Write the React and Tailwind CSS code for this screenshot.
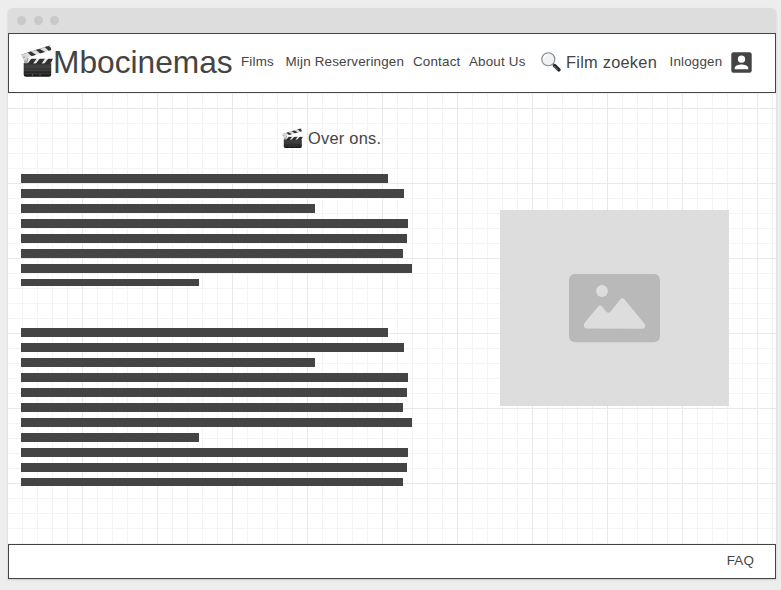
const paragraphs = [
  [
    'h-[9px] w-[367px]', 'h-[9px] w-[383px]', 'h-[9px] w-[294px]', 'h-[9px] w-[387px]',
    'h-[9px] w-[386px]', 'h-[9px] w-[382px]', 'h-[9px] w-[391px]', 'h-[7px] w-[178px]',
  ],
  [
    'h-[9px] w-[367px]', 'h-[9px] w-[383px]', 'h-[9px] w-[294px]', 'h-[9px] w-[387px]',
    'h-[9px] w-[386px]', 'h-[9px] w-[382px]', 'h-[9px] w-[391px]', 'h-[9px] w-[178px]',
    'h-[9px] w-[387px]', 'h-[9px] w-[386px]', 'h-[8px] w-[382px]',
  ],
];

function Clapper({ className }) {
  return (
    <svg viewBox="0 0 32 32" preserveAspectRatio="none" className={className} aria-hidden="true">
      <defs>
        <linearGradient id="slate" x1="0" y1="0" x2="0" y2="1">
          <stop offset="0" stopColor="#444" />
          <stop offset=".55" stopColor="#303030" />
          <stop offset="1" stopColor="#151515" />
        </linearGradient>
        <clipPath id="topStick"><path d="M.2 9.5 29.4.3 30.2 5 1.8 14Z" /></clipPath>
        <clipPath id="lowStick"><path d="M2 13.8H31.8L30.4 19H3Z" /></clipPath>
      </defs>
      <path d="M2.7 18H30.2V29.5Q30.2 31.8 28 31.8H5Q2.7 31.8 2.7 29.5Z" fill="url(#slate)" />
      <path d="M3.5 22.2H29.8M3.5 25.2H29.8M3.5 28.8H29.8" stroke="#5c5c5c" strokeWidth=".5" />
      <path d="M11.5 29V31M19 29V31" stroke="#777" strokeWidth=".6" />
      <g clipPath="url(#topStick)">
        <path d="M0 0H32V16H0Z" fill="#dedede" />
        <path d="M5 6H9L17 11 12 12.4ZM13 3.5H18L26 8 20.5 9.5ZM22 .5H27L35 6.5 29 7Z" fill="#333" />
        <path d="M.2 9.5 29.4.3" stroke="#777" strokeWidth=".7" />
      </g>
      <path d="M.2 9.5 2 14 4 18.5H8L8.8 15 5 10Z" fill="#d5d5d5" />
      <path d="M3 15.5 7.2 14.8 6 18.5H3.5Z" fill="#aaa" />
      <circle cx="3" cy="12" r=".6" fill="#555" />
      <circle cx="6.6" cy="14" r=".6" fill="#555" />
      <g clipPath="url(#lowStick)">
        <path d="M7 13.5H32V19H7Z" fill="#e6e6e6" />
        <path d="M10.8 13H16L11.5 19.5H6ZM19.2 13H24.4L20 19.5H14.2ZM27.8 13H33L28.5 19.5H22.6Z" fill="#303030" />
      </g>
      <path d="M3 18.8H30.3" stroke="#292929" strokeWidth=".8" />
    </svg>
  );
}

function Magnifier() {
  return (
    <svg viewBox="0 0 20 20" className="mt-px h-5 w-5 shrink-0" aria-hidden="true">
      <path d="m11.7 11.8 2.3 2.3" stroke="#8b9299" strokeWidth="2.2" />
      <path d="m13.7 13.8 4.1 4" stroke="#242729" strokeWidth="3.7" strokeLinecap="round" />
      <path d="m12.8 14 3.8 3.9" stroke="#66727a" strokeWidth="1.1" />
      <circle cx="7.3" cy="7.3" r="6.5" fill="#f0f2f3" stroke="#7b858d" strokeWidth="1.1" />
      <path d="M2.6 7.4A4.8 4.8 0 0 1 7.3 2.6" fill="none" stroke="#fff" strokeWidth="1.2" />
    </svg>
  );
}

function Account() {
  return (
    <svg viewBox="0 0 21 21" className="ml-[9px] h-[21px] w-[21px] shrink-0" aria-hidden="true">
      <rect x=".3" y=".3" width="20.4" height="20.4" rx="2.2" fill="#444" />
      <circle cx="10.5" cy="7.2" r="3.6" fill="#fff" />
      <path d="M3.7 17.2V16C3.7 13.6 8 12.5 10.5 12.5S17.3 13.6 17.3 16V17.2Z" fill="#fff" />
    </svg>
  );
}

function Picture() {
  return (
    <svg viewBox="0 0 91 69" className="h-[69px] w-[91px]" aria-hidden="true">
      <rect y="-.1" width="91" height="68.4" rx="6" fill="#b9b9b9" />
      <circle cx="33" cy="17" r="5.9" fill="#ddd" />
      <path d="M15.5 49 28.9 32.8Q31.1 30 33.4 32.8L36.6 37Q39.4 40.3 42 37L51.3 25.5Q53.4 22.8 55.6 25.5L75.1 49.3C77.5 52.3 75.8 54.8 72.8 54.8L18 54.6C15 54.6 14 51.4 15.5 49Z" fill="#ddd" />
    </svg>
  );
}

export default function App() {
  return (
    <div className="h-[590px] w-[781px] overflow-hidden bg-[#ededed] px-2 pt-2 font-['Liberation_Sans',Arial,sans-serif] text-[#444]">
      <div className="flex h-[571px] w-[768px] flex-col rounded-t bg-white shadow-[0_1px_2px_rgba(0,0,0,0.15)]">
        <div className="flex h-[25px] shrink-0 items-center gap-[7.5px] rounded-t bg-[#ddd] pl-[9px]">
          <span className="h-[9px] w-[9px] rounded-full bg-[#c9c9c9]" />
          <span className="h-[9px] w-[9px] rounded-full bg-[#c9c9c9]" />
          <span className="h-[9px] w-[9px] rounded-full bg-[#c9c9c9]" />
        </div>
        <header className="flex h-[60px] shrink-0 items-center whitespace-nowrap border border-[#444] bg-white pb-0.5 pl-3">
          <Clapper className="-mt-0.5 h-8 w-8 shrink-0" />
          <h1 className="w-[188px] text-[31.7px] leading-9">Mbocinemas</h1>
          <nav className="flex items-center pt-px text-[13.4px] tracking-[0.18px]">
            <a className="w-[44.5px]">Films</a>
            <a className="w-[127.5px]">Mijn Reserveringen</a>
            <a className="w-[56px]">Contact</a>
            <a className="w-[72px]">About Us</a>
          </nav>
          <div className="flex w-[128.5px] items-center text-[16.4px] tracking-[0.24px]">
            <Magnifier />
            <span className="ml-[5px] pt-px">Film zoeken</span>
          </div>
          <a className="pt-px text-[13.4px] tracking-[0.18px]">Inloggen</a>
          <Account />
        </header>
        <main className="flex h-[451px] shrink-0 bg-[linear-gradient(to_right,#e9e9e9_1px,transparent_1px),linear-gradient(to_bottom,#e9e9e9_1px,transparent_1px),linear-gradient(to_right,#f4f4f4_1px,transparent_1px),linear-gradient(to_bottom,#f4f4f4_1px,transparent_1px)] bg-[size:75px_75px,75px_75px,15px_15px,15px_15px] bg-[position:74px_0,0_15px,14px_0,0_0]">
          <section className="w-[492px] pl-[13px] pt-[35px]">
            <h2 className="flex h-[21px] items-center pl-[261px] text-[16.4px] tracking-[0.24px]">
              <Clapper className="-mt-px h-5 w-[21px]" />
              <span className="ml-[5px]">Over ons.</span>
            </h2>
            <div className="mt-[25px] flex flex-col gap-[42px]">
              {paragraphs.map((lines, p) => (
                <div key={p} className="flex flex-col gap-1.5">
                  {lines.map((line, i) => (
                    <div key={i} className={`bg-[#444] ${line}`} />
                  ))}
                </div>
              ))}
            </div>
          </section>
          <div className="mt-[117px] flex h-[196px] w-[229px] items-center justify-center bg-[#ddd]">
            <Picture />
          </div>
        </main>
        <footer className="flex h-[35px] shrink-0 items-center justify-end border border-[#444] bg-white pr-[21px] text-[13.4px] tracking-[0.18px]">
          FAQ
        </footer>
      </div>
    </div>
  );
}
